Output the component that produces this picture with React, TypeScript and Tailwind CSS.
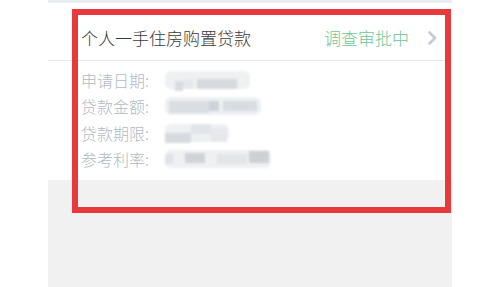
const font = { fontFamily: '"Noto Sans CJK SC", "Noto Sans", sans-serif' }

type Block = [number, number, number, number, string]

const rows: { label: string; width: number; blocks: Block[] }[] = [
  { label: '申请日期:', width: 85, blocks: [[10, 8, 10, 10, '#d9dde1'], [32, 40, 8, 10, '#d6dadf'], [18, 10, 8, 10, '#e6e9ec']] },
  { label: '贷款金额:', width: 96, blocks: [[4, 40, 4, 12, '#d9dee3'], [44, 10, 4, 10, '#cdd3d9'], [58, 34, 4, 10, '#d8dde2']] },
  { label: '贷款期限:', width: 64, blocks: [[0, 26, 9, 10, '#d7dbdf'], [26, 20, 0, 10, '#e2e5e8'], [46, 16, 4, 14, '#e6e8eb']] },
  { label: '参考利率:', width: 106, blocks: [[0, 8, 4, 10, '#dfe3e7'], [20, 20, 3, 10, '#d0d4d8'], [52, 30, 4, 10, '#e3e6e9'], [84, 20, 1, 12, '#cdd1d5']] },
]

function Chevron() {
  return (
    <svg width="11" height="14" viewBox="0 0 11 14" className="ml-[18px]">
      <path d="M2.5 1.5 L8 7 L2.5 12.5" fill="none" stroke="#c3cbd2" strokeWidth="2.6" strokeLinecap="round" strokeLinejoin="round" />
    </svg>
  )
}

export default function App() {
  return (
    <div className="relative flex h-[287px] w-[498px] bg-white" style={font}>
      <div className="ml-[48px] flex w-[404px] flex-col">
        <div className="h-[3px] bg-[#e9edf1]" />
        <div className="h-[13px]" />
        <div className="flex h-[45px] items-center border-b border-[#e6e9ec] pl-[33px] pr-[14px]">
          <span className="flex-1 text-[17px] font-light text-[#3a3a3a]">个人一手住房购置贷款</span>
          <span className="text-[17px] font-light text-[#6cc697]">调查审批中</span>
          <Chevron />
        </div>
        <div className="flex flex-col pt-[6px] pb-[8px] pl-[33px]">
          {rows.map(r => (
            <div key={r.label} className="flex h-[26.3px] items-center">
              <span className="w-[84px] text-[16px] font-light text-[#b0bac3]">{r.label}</span>
              <div className="relative h-[18px] rounded-[6px] bg-[#eef0f2] blur-[1px]" style={{ width: r.width }}>
                {r.blocks.map(([x, w, y, h, c], i) => (
                  <span key={i} className="absolute" style={{ left: x, width: w, top: y, height: h, background: c }} />
                ))}
              </div>
            </div>
          ))}
        </div>
        <div className="flex-1 bg-[#f1f1f2]" />
      </div>
      {/* annotation box */}
      <div className="pointer-events-none absolute left-[72px] top-[9px] h-[204px] w-[379px] border-[6px] border-[#e8393c]" />
    </div>
  )
}
